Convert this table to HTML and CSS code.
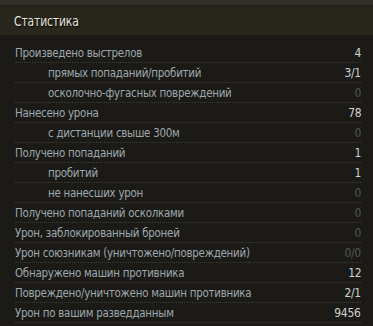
FILE: index.html
```html
<!DOCTYPE html>
<html lang="ru">
<head>
<meta charset="utf-8">
<link rel="stylesheet" href="styles.css">
</head>
<body>
<div class="panel">
  <div class="topstrip"></div>
  <div class="header"><span class="title">Статистика</span></div>
  <ul class="stats">
    <li class="row"><span class="label">Произведено выстрелов</span><span class="val">4</span></li>
    <li class="row sub"><span class="label">прямых попаданий/пробитий</span><span class="val">3/1</span></li>
    <li class="row sub"><span class="label">осколочно-фугасных повреждений</span><span class="val zero">0</span></li>
    <li class="row"><span class="label">Нанесено урона</span><span class="val">78</span></li>
    <li class="row sub"><span class="label">с дистанции свыше 300м</span><span class="val zero">0</span></li>
    <li class="row"><span class="label">Получено попаданий</span><span class="val">1</span></li>
    <li class="row sub"><span class="label">пробитий</span><span class="val">1</span></li>
    <li class="row sub"><span class="label">не нанесших урон</span><span class="val zero">0</span></li>
    <li class="row"><span class="label">Получено попаданий осколками</span><span class="val zero">0</span></li>
    <li class="row"><span class="label">Урон, заблокированный броней</span><span class="val zero">0</span></li>
    <li class="row"><span class="label">Урон союзникам (уничтожено/повреждений)</span><span class="val zero">0/0</span></li>
    <li class="row"><span class="label">Обнаружено машин противника</span><span class="val">12</span></li>
    <li class="row"><span class="label">Повреждено/уничтожено машин противника</span><span class="val">2/1</span></li>
    <li class="row"><span class="label">Урон по вашим разведданным</span><span class="val">9456</span></li>
  </ul>
</div>
</body>
</html>
```
FILE: styles.css
```css
html, body {
  margin: 0;
  padding: 0;
  background: #1b1a17;
}
.panel {
  width: 373px;
  height: 326px;
  overflow: hidden;
  background: #1b1a17;
  font-family: "DejaVu Sans", sans-serif;
  font-stretch: condensed;
}
.topstrip {
  height: 5px;
  background: #31302b;
  border-bottom: 1px solid #1e1d19;
}
.header {
  height: 29px;
  background: #29261d;
  display: flex;
  align-items: center;
  padding-left: 14px;
}
.title {
  display: inline-block;
  color: #e6e6df;
  font-size: 14px;
  text-shadow: 1px 1px 1px #000;
  letter-spacing: -0.2px;
  transform: scaleX(0.86);
  transform-origin: left center;
}
.stats {
  list-style: none;
  margin: 8px 12px 0 15px;
  padding: 0;
}
.row {
  height: 19px;
  border-bottom: 1px dotted #3c3b37;
  display: flex;
  align-items: center;
  justify-content: space-between;
  font-size: 13px;
}
.label {
  display: inline-block;
  color: #9ea8ae;
  letter-spacing: -0.3px;
  white-space: nowrap;
  transform: scaleX(0.88);
  transform-origin: left center;
}
.sub .label {
  margin-left: 33px;
}
.val {
  display: inline-block;
  color: #cfd3d3;
  font-size: 13px;
  letter-spacing: -0.3px;
  transform: scaleX(0.92);
  transform-origin: right center;
}
.val.zero {
  color: #56564f;
}
```
